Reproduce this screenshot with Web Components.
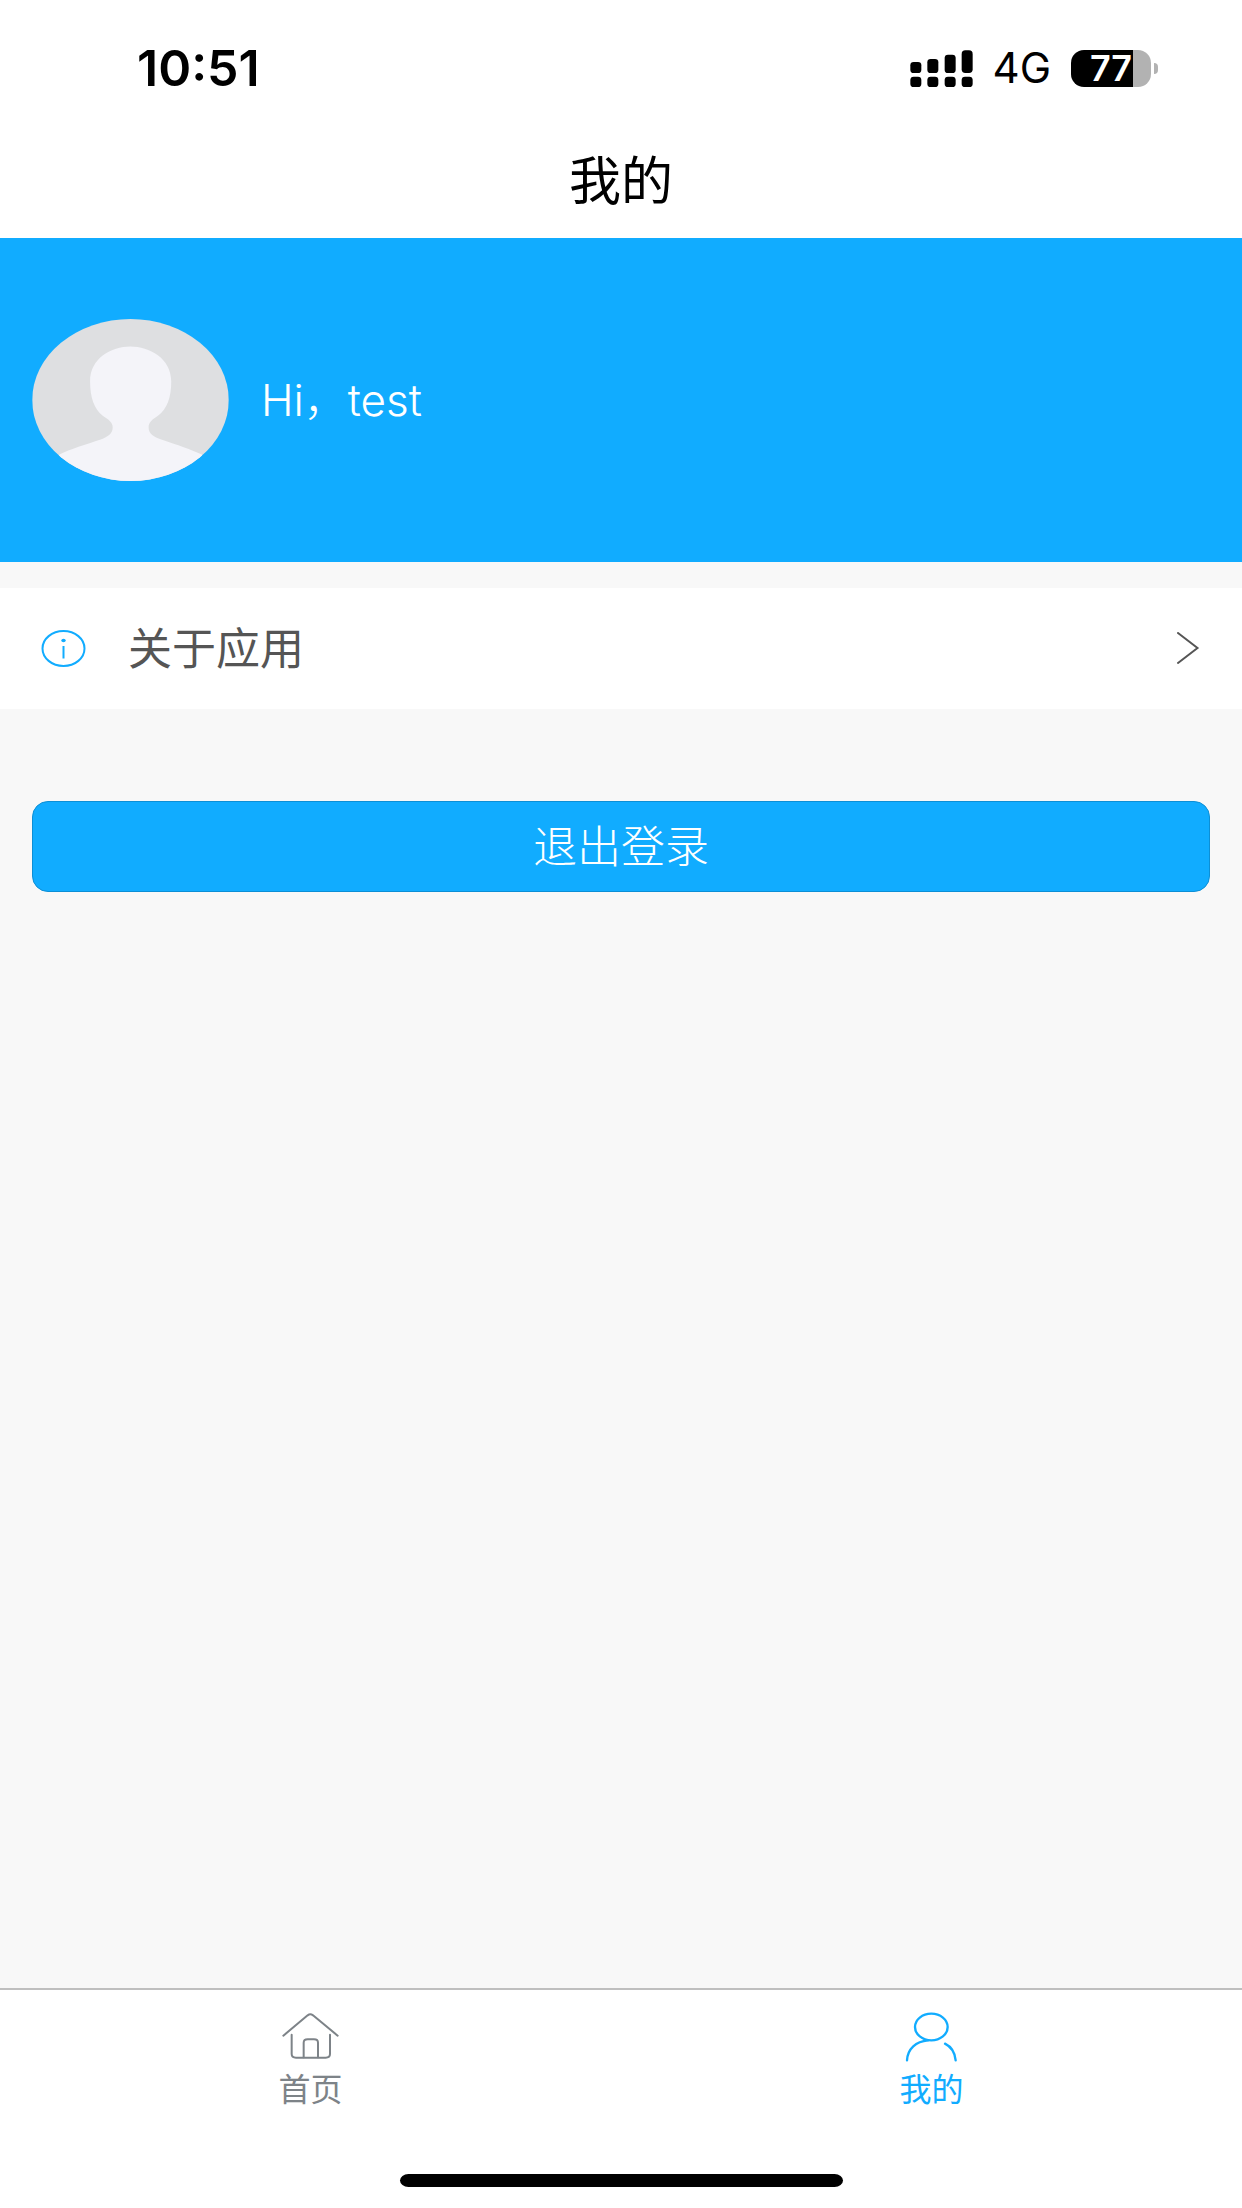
<!DOCTYPE html>
<html lang="zh-CN">
<head>
<meta charset="utf-8">
<meta name="viewport" content="width=device-width, initial-scale=1">
<title>我的</title>
<style>
  html, body { margin: 0; }
  body {
    --brand: #11acff;
    --page: #f8f8f8;
    --ink: #555;
    --muted: #7d8388;
    --gutter: 32px;
    font-family: Inter, "Noto Sans CJK SC", sans-serif;
    color: #000;
    background: var(--page);
  }
</style>
</head>
<body>
<mine-page></mine-page>

<script>
const define = (name, html, setup) => {
  const template = document.createElement('template');
  template.innerHTML = `<style>*{box-sizing:border-box}</style>${html}`;
  customElements.define(name, class extends HTMLElement {
    connectedCallback() {
      if (this.shadowRoot) return;
      this.attachShadow({ mode: 'open' }).append(template.content.cloneNode(true));
      if (setup) setup(this, this.shadowRoot);
    }
  });
};

define('signal-dots', `
  <style>:host{display:block;width:63px;height:37px} svg{display:block;width:100%;height:100%}</style>
  <svg viewBox="84 57 189 111" aria-hidden="true">
    <rect x="85" y="93" width="33" height="33" rx="10"/>
    <rect x="136" y="84" width="33" height="42" rx="10"/>
    <rect x="188" y="71" width="33" height="55" rx="10"/>
    <rect x="239" y="58" width="33" height="68" rx="11"/>
    <rect x="85" y="137" width="33" height="31" rx="10"/>
    <rect x="136" y="137" width="33" height="31" rx="10"/>
    <rect x="188" y="137" width="33" height="31" rx="10"/>
    <rect x="239" y="137" width="33" height="31" rx="10"/>
  </svg>`);

define('battery-level', `
  <style>
    :host{display:flex;align-items:center;gap:3px}
    .cell{display:flex;align-items:center;justify-content:center;width:80px;height:37px;border-radius:13px;
      background:linear-gradient(90deg,#000 77%,#b2b2b2 77%);color:#fff;font-size:36px;font-weight:600;line-height:37px}
    .nub{width:4px;height:11px;border-radius:0 4px 4px 0;background:#b2b2b2}
  </style>
  <div class="cell"><slot></slot></div><div class="nub"></div>`);

define('status-bar', `
  <style>
    :host{display:flex;align-items:center;justify-content:space-between;height:136px;padding:0 84px 0 137px}
    .time{font-size:50px;font-weight:600;line-height:56px}
    .right{display:flex;align-items:center;gap:20px}
    .net{font-size:42px;font-weight:400;line-height:48px}
  </style>
  <span class="time">10:51</span>
  <div class="right"><signal-dots></signal-dots><span class="net">4G</span><battery-level>77</battery-level></div>`);

define('title-bar', `
  <style>
    :host{display:block;padding-bottom:10px}
    h1{margin:0;font-size:52px;font-weight:400;line-height:92px;text-align:center}
  </style>
  <h1><slot></slot></h1>`);

define('profile-banner', `
  <style>
    :host{display:flex;align-items:center;gap:32px;height:324px;padding:0 var(--gutter);background:var(--brand);color:#fff;
      font-size:44px;font-weight:300;line-height:60px}
    svg{display:block;width:197px;height:162px;flex:none}
  </style>
  <svg viewBox="96 87 591 487" role="img" aria-label="头像">
    <clipPath id="c"><ellipse cx="391.500" cy="330.500" rx="295.500" ry="243.500"/></clipPath>
    <g clip-path="url(#c)">
      <rect x="96" y="87" width="591" height="487" fill="#dedfe1"/>
      <path fill="#f4f4f9" d="M391 170C448 170 514 205 514 275C514 322 502 358 474 378C456 390 446 398 446 413C446 432 462 442 484 449C532 465 575 480 606 494L640 600H140L178 494C210 478 258 464 302 449C324 441 338 431 338 413C338 398 326 390 308 378C282 358 270 322 270 275C270 205 334 170 391 170Z"/>
    </g>
  </svg>
  <span><slot></slot></span>`);

define('menu-row', `
  <style>
    :host{display:block;background:#fff}
    a{display:flex;align-items:center;height:121px;padding:0 42px 0 41px;color:var(--ink);text-decoration:none;font-size:44px;line-height:60px}
    .info{width:45px;height:38px;margin-right:42px;flex:none}
    .label{flex:1}
    .go{width:24px;height:34px;flex:none}
  </style>
  <a href="#about">
    <svg class="info" viewBox="0 0 45 38" fill="none" stroke="#11acff" stroke-width="2" aria-hidden="true">
      <ellipse cx="22.500" cy="18.500" rx="21" ry="17.500"/>
      <path d="M22.500 16V28.500"/>
      <ellipse cx="22.500" cy="10.500" rx="2.200" ry="1.800" fill="#11acff" stroke="none"/>
    </svg>
    <span class="label"><slot></slot></span>
    <svg class="go" viewBox="0 0 24 34" fill="none" stroke="#555" stroke-width="2" stroke-linecap="round" aria-hidden="true"><path d="M2 1L21.500 16L2 31"/></svg>
  </a>`);

define('main-button', `
  <style>
    :host{display:block;padding:0 var(--gutter)}
    button{display:block;width:100%;height:91px;padding:0;border:1px solid #0c8fd6;border-radius:16px;background:var(--brand);
      color:#fff;font:inherit;font-size:44px;font-weight:300;line-height:60px}
  </style>
  <button type="button"><slot></slot></button>`);

define('tab-item', `
  <style>
    :host{display:block;flex:1;color:var(--muted)}
    :host([active]){color:var(--brand)}
    a{display:flex;flex-direction:column;align-items:center;gap:8px;color:inherit;text-decoration:none;font-size:32px;line-height:40px}
    ::slotted(svg){display:block;width:58px;height:50px}
  </style>
  <a><slot name="icon"></slot><span><slot></slot></span></a>`,
  (host, root) => {
    const link = root.querySelector('a');
    link.href = host.getAttribute('to');
    if (host.hasAttribute('active')) link.setAttribute('aria-current', 'page');
  });

define('tab-bar', `
  <style>
    :host{display:flex;flex-direction:column;justify-content:space-between;height:220px;border-top:2px solid #bfbfbf;background:#fff;padding:22px 0 21px}
    nav{display:flex}
    .home{align-self:center;width:443px;height:13px;border-radius:9px/7px;background:#000}
  </style>
  <nav><slot></slot></nav><div class="home"></div>`);

define('mine-page', `
  <style>
    :host{display:flex;flex-direction:column;min-height:100vh}
    header{background:#fff}
    main{flex:1;display:flex;flex-direction:column}
    menu-row{margin-top:26px}
    main-button{margin-top:92px}
  </style>
  <header><status-bar></status-bar><title-bar>我的</title-bar></header>
  <main>
    <profile-banner>Hi，test</profile-banner>
    <menu-row>关于应用</menu-row>
    <main-button>退出登录</main-button>
  </main>
  <tab-bar>
    <tab-item to="#home">
      <svg slot="icon" viewBox="126 124 174 150" fill="none" stroke="currentColor" stroke-width="6" stroke-linecap="round" stroke-linejoin="round" aria-hidden="true">
        <path d="M130 195L203 134Q211 128 219 134L293 195"/>
        <path d="M155 192V250Q155 261 168 261H257Q270 261 270 250V192"/>
        <path d="M191 260V216Q191 206 203 206H222Q234 206 234 216V260"/>
      </svg>首页</tab-item>
    <tab-item to="#mine" active>
      <svg slot="icon" viewBox="129 124 174 150" fill="none" stroke="currentColor" stroke-width="7" stroke-linecap="round" aria-hidden="true">
        <ellipse cx="214" cy="169" rx="49" ry="40"/>
        <path d="M141 269C143 234 168 212 204 209"/>
        <path d="M255 219C275 229 285 247 287 269"/>
      </svg>我的</tab-item>
  </tab-bar>`);
</script>
</body>
</html>
